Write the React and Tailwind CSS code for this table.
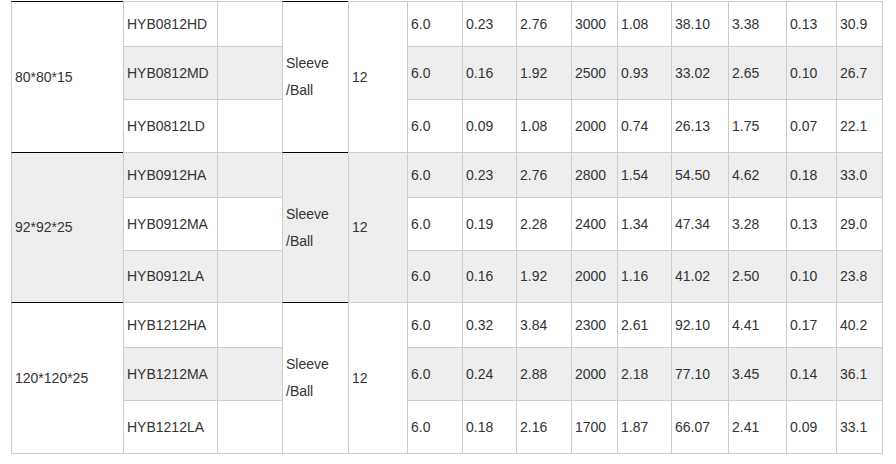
import React from "react";

const groups = [
  {
    size: "80*80*15",
    rows: [
      ["HYB0812HD", "6.0", "0.23", "2.76", "3000", "1.08", "38.10", "3.38", "0.13", "30.9"],
      ["HYB0812MD", "6.0", "0.16", "1.92", "2500", "0.93", "33.02", "2.65", "0.10", "26.7"],
      ["HYB0812LD", "6.0", "0.09", "1.08", "2000", "0.74", "26.13", "1.75", "0.07", "22.1"],
    ],
  },
  {
    size: "92*92*25",
    rows: [
      ["HYB0912HA", "6.0", "0.23", "2.76", "2800", "1.54", "54.50", "4.62", "0.18", "33.0"],
      ["HYB0912MA", "6.0", "0.19", "2.28", "2400", "1.34", "47.34", "3.28", "0.13", "29.0"],
      ["HYB0912LA", "6.0", "0.16", "1.92", "2000", "1.16", "41.02", "2.50", "0.10", "23.8"],
    ],
  },
  {
    size: "120*120*25",
    rows: [
      ["HYB1212HA", "6.0", "0.32", "3.84", "2300", "2.61", "92.10", "4.41", "0.17", "40.2"],
      ["HYB1212MA", "6.0", "0.24", "2.88", "2000", "2.18", "77.10", "3.45", "0.14", "36.1"],
      ["HYB1212LA", "6.0", "0.18", "2.16", "1700", "1.87", "66.07", "2.41", "0.09", "33.1"],
    ],
  },
];

function Cell({ gray, black, span, className = "", children }) {
  return (
    <div
      className={
        "flex items-center pl-[3px] border-l border-t border-l-[#cccccc] " +
        (black ? "border-t-black " : "border-t-[#cccccc] ") +
        (gray ? "bg-[#eeeeee] " : "bg-white ") +
        (span ? "row-span-3 " : "") +
        className
      }
    >
      {children}
    </div>
  );
}

export default function App() {
  const cells = [];
  let idx = 0;
  groups.forEach((g, gi) => {
    g.rows.forEach((r, ri) => {
      const gray = idx % 2 === 1;
      if (ri === 0) {
        cells.push(
          <Cell key={`s${gi}`} gray={gray} black span>
            {g.size}
          </Cell>
        );
      }
      cells.push(
        <Cell key={`m${idx}`} gray={gray}>
          {r[0]}
        </Cell>
      );
      cells.push(<Cell key={`e${idx}`} gray={gray} />);
      if (ri === 0) {
        cells.push(
          <Cell key={`b${gi}`} gray={gray} black span className="leading-[27px]">
            <span>
              Sleeve
              <br />
              /Ball
            </span>
          </Cell>
        );
        cells.push(
          <Cell key={`v${gi}`} gray={gray} span>
            12
          </Cell>
        );
      }
      r.slice(1).forEach((v, vi) => {
        cells.push(
          <Cell key={`d${idx}-${vi}`} gray={gray}>
            {v}
          </Cell>
        );
      });
      idx++;
    });
  });

  return (
    <div className="w-[896px] h-[464px] bg-white overflow-hidden font-['Liberation_Sans',Arial,sans-serif] text-[14px] text-[#333333]">
      <div className="ml-[11px] mt-px w-fit border-r border-b border-[#cccccc]">
        <div className="grid grid-cols-[112px_94px_65px_66px_59px_55px_54px_55px_46px_54px_57px_58px_50px_46px] grid-rows-[45px_53px_53px_45px_53px_52px_45px_53px_53px]">
          {cells}
        </div>
      </div>
    </div>
  );
}
